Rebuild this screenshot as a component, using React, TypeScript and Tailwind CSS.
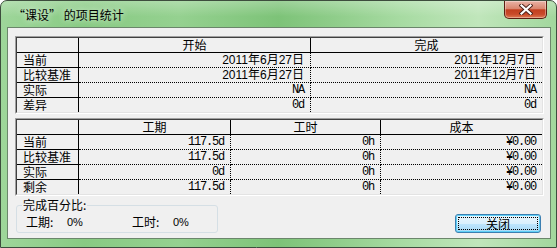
import React from 'react';

const cjk = "font-['Noto_Sans_CJK_SC','Microsoft_YaHei',sans-serif]";
const mono = "font-['Liberation_Mono','Noto_Sans_CJK_SC',monospace] text-[12px] tracking-[-1.2px]";
const dateFont = "font-['Liberation_Sans','Noto_Sans_CJK_SC',sans-serif] text-[12px]";

interface Column {
  title: string;
  width: string;
}

interface StatTableProps {
  columns: Column[];
  labels: string[];
  rows: string[][];
  rowFonts: string[];
}

function StatTable({ columns, labels, rows, rowFonts }: StatTableProps) {
  return (
    <div className="w-[529px] h-[78px] border border-t-[#a0a0a0] border-l-[#a0a0a0] border-r-white border-b-white">
      <div className="h-full flex flex-col border border-t-[#404040] border-l-[#404040] border-r-[#e3e3e3] border-b-[#e3e3e3]">
        <div className="flex h-[15px] shrink-0 border-b border-black">
          <div className="w-[62px] shrink-0 border-r border-black" />
          {columns.map((c, i) => (
            <div
              key={c.title}
              className={`${c.width} ${i < columns.length - 1 ? 'border-r border-black' : ''} ${cjk} text-[12px] leading-[14px] text-center text-black`}
            >
              {c.title}
            </div>
          ))}
        </div>
        {labels.map((label, r) => {
          const last = r === labels.length - 1;
          return (
            <div key={label} className={`flex shrink-0 ${last ? 'h-[14px]' : 'h-[15px]'}`}>
              <div
                className={`w-[62px] shrink-0 border-r border-black pl-[6px] ${cjk} text-[12px] leading-[14px] text-black ${last ? '' : 'border-b'}`}
              >
                {label}
              </div>
              {rows[r].map((v, i) => (
                <div
                  key={i}
                  className={`${columns[i].width} border-black ${last ? '' : 'border-b border-dotted'} ${i < columns.length - 1 ? 'border-r border-r-black border-dotted' : ''} pr-[6px] text-right leading-[14px] text-black ${rowFonts[r]}`}
                >
                  {v}
                </div>
              ))}
            </div>
          );
        })}
      </div>
    </div>
  );
}

function CloseGlyph() {
  return (
    <svg width="14" height="11" viewBox="0 0 14 11">
      <path d="M2.5 1.5 L11.5 9.5 M11.5 1.5 L2.5 9.5" stroke="#4a2018" strokeWidth="4" strokeLinecap="square" />
      <path d="M2.5 1.5 L11.5 9.5 M11.5 1.5 L2.5 9.5" stroke="#ffffff" strokeWidth="2.2" strokeLinecap="square" />
    </svg>
  );
}

export default function App() {
  const t1Cols: Column[] = [
    { title: '开始', width: 'w-[232px] shrink-0' },
    { title: '完成', width: 'flex-1' },
  ];
  const t2Cols: Column[] = [
    { title: '工期', width: 'w-[152px] shrink-0' },
    { title: '工时', width: 'w-[150px] shrink-0' },
    { title: '成本', width: 'flex-1' },
  ];

  return (
    <div className="w-[557px] h-[248px] overflow-hidden bg-white">
      <div className="h-full flex flex-col rounded-t-[7px] border border-[#3d4d3d] bg-[linear-gradient(90deg,#9ed69a_0%,#88ca83_15%,#95d190_32%,#7dc378_50%,#8fcd8a_60%,#a7dba2_72%,#c0e6bb_86%,#a2d79d_100%)]">
        <div className="flex h-[26px] shrink-0 items-start bg-[linear-gradient(180deg,rgba(255,255,255,0.25)_0%,rgba(255,255,255,0)_60%)] rounded-t-[6px]">
          <span className={`ml-[12px] mt-[6px] ${cjk} text-[12px] leading-[16px] text-black [text-shadow:0_0_6px_rgba(255,255,255,0.9)]`}>
            “课设” 的项目统计
          </span>
          <div className="ml-auto mr-[9px] w-[43px] h-[18px] flex items-center justify-center rounded-b-[5px] border border-t-0 border-[#5a1d12] bg-[linear-gradient(180deg,#e9b3a6_0%,#d9866f_45%,#c23f1f_52%,#c94a2a_78%,#df7a52_100%)] shadow-[inset_0_0_0_1px_rgba(255,255,255,0.35)]">
            <CloseGlyph />
          </div>
        </div>

        <div className="pl-[6px] pr-[5px]">
          <div className="h-[212px] flex flex-col border border-[#6b866b] bg-[#f0f0f0] pl-[7px] pt-[8px]">
            <StatTable
              columns={t1Cols}
              labels={['当前', '比较基准', '实际', '差异']}
              rows={[
                ['2011年6月27日', '2011年12月7日'],
                ['2011年6月27日', '2011年12月7日'],
                ['NA', 'NA'],
                ['0d', '0d'],
              ]}
              rowFonts={[dateFont, dateFont, mono, mono]}
            />
            <div className="mt-[4px]">
              <StatTable
                columns={t2Cols}
                labels={['当前', '比较基准', '实际', '剩余']}
                rows={[
                  ['117.5d', '0h', '¥0.00'],
                  ['117.5d', '0h', '¥0.00'],
                  ['0d', '0h', '¥0.00'],
                  ['117.5d', '0h', '¥0.00'],
                ]}
                rowFonts={[mono, mono, mono, mono]}
              />
            </div>

            <div className="flex-1 flex items-end pb-[5px]">
              <div className="relative ml-[1px] w-[202px] h-[28px] rounded-[3px] border border-[#d5dfe5]">
                <span className={`absolute -top-[8px] left-[5px] px-[1px] bg-[#f0f0f0] ${cjk} text-[12px] leading-[14px] text-black`}>
                  完成百分比:
                </span>
                <div className={`flex pl-[9px] pt-[9px] ${cjk} text-[12px] leading-[14px] text-black`}>
                  <span className="w-[41px]">工期:</span>
                  <span className="w-[65px] font-['Liberation_Sans',sans-serif] text-[11px]">0%</span>
                  <span className="w-[41px]">工时:</span>
                  <span className="font-['Liberation_Sans',sans-serif] text-[11px]">0%</span>
                </div>
              </div>
              <div className="ml-auto mr-[9px] w-[86px] h-[19px] rounded-[3px] border border-[#3c7fb1] bg-[linear-gradient(180deg,#eaf6fd_0%,#d9f0fc_50%,#bee6fd_51%,#a7d9f5_100%)] shadow-[inset_0_0_0_1px_#5fd0f7] p-[2px]">
                <div className={`h-full flex items-center justify-center border border-dotted border-black ${cjk} text-[12px] leading-[13px] text-black`}>
                  关闭
                </div>
              </div>
            </div>
          </div>
        </div>
      </div>
    </div>
  );
}
